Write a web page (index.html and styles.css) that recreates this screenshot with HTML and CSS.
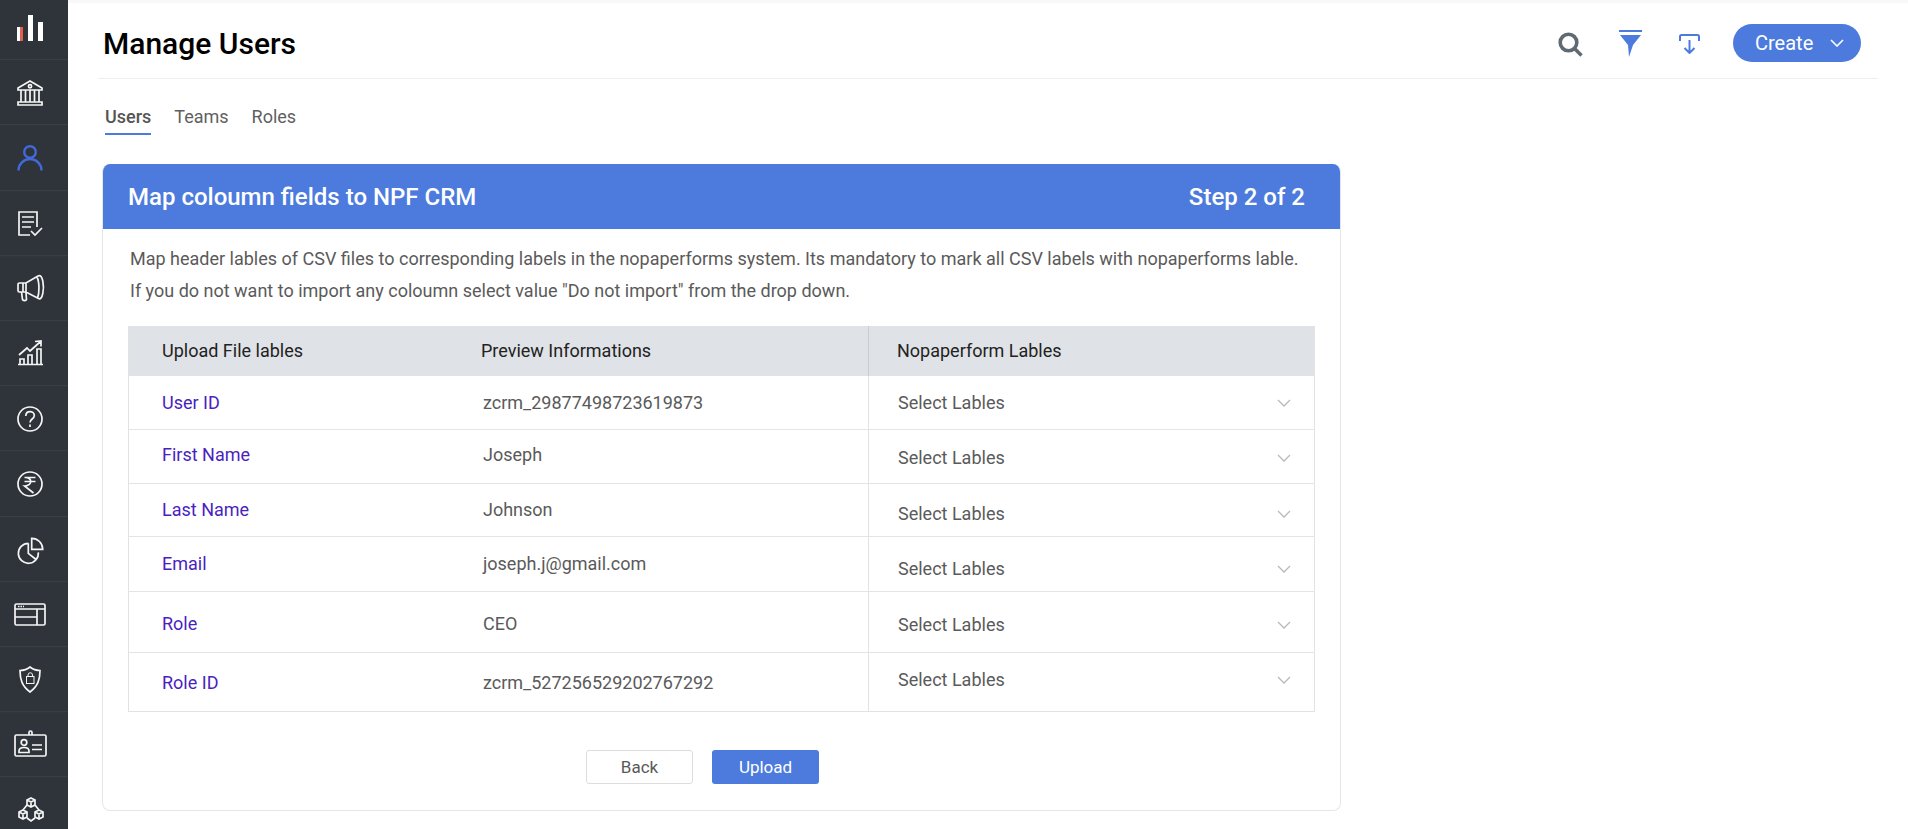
FILE: index.html
```html
<!DOCTYPE html>
<html lang="en">
  <head>
    <meta charset="utf-8">
    <title>Manage Users</title>
    <link rel="stylesheet" href="styles.css">
  </head>
  <body>
    <div class='app'>
      <div class='sidebar'>
        <div class='navitem first'>
          <svg viewBox='0 0 30 30' class='navicon'><g fill='#fff' stroke='none'><rect x='2' y='14' width='3' height='14'/><rect x='5' y='14' width='3' height='14' fill='#e0604f'/><rect x='13' y='2' width='5' height='26'/><rect x='23' y='9' width='5' height='19'/></g></svg>
        </div>
        <div class='navitem'>
          <svg viewBox='0 0 30 30' class='navicon'><path d='M15 3 3 10v2h24v-2zM3 24h24v3H3zM6 12v12M10.500 12v12M15 12v12M19.500 12v12M24 12v12'/><circle cx='15' cy='8.200' r='1.600'/></svg>
        </div>
        <div class='navitem'>
          <svg viewBox='0 0 30 30' class='navicon active'><circle cx='15' cy='9' r='5.800'/><path d='M3.500 27.500a11.500 11.500 0 0 1 23 0'/></svg>
        </div>
        <div class='navitem'>
          <svg viewBox='0 0 30 30' class='navicon'><path d='M15 27H4V4h18v15M7 9h12M7 14h12M7 19h9'/><path d='M16 23l4 4 7-7'/></svg>
        </div>
        <div class='navitem'>
          <svg viewBox='0 0 30 30' class='navicon'><path d='M4.500 10H11L23 3c2.500-1.500 4 1 4.800 5 .8 4 .8 9 0 12.500-.8 4-2.300 6-4.300 5L11 19H4.500A1.500 1.500 0 0 1 3 17.500v-6A1.500 1.500 0 0 1 4.500 10zM11 10v9M8 10v9M6.500 19l1 7.500c.3 1.500 3.700 1.500 4 0L11 19.500M22 4c2.500 5 2.500 16 .5 21.500'/></svg>
        </div>
        <div class='navitem'>
          <svg viewBox='0 0 30 30' class='navicon'><path d='M3 26.500h25M5 26v-5h4v5M13 26v-9h4v9M22 26V11h4v15M4 17l8-7 3 3 10-9M20 3.500l6-.5v5.500'/></svg>
        </div>
        <div class='navitem'>
          <svg viewBox='0 0 30 30' class='navicon'><circle cx='15' cy='15' r='12'/><path d='M10.800 12c0-6 8.500-5.500 8.500-.5 0 3.500-4.300 3.500-4.300 7M15 20.500v2.500'/></svg>
        </div>
        <div class='navitem'>
          <svg viewBox='0 0 30 30' class='navicon'><circle cx='15' cy='15' r='12'/><path d='M9.500 8.500h11M9.500 12.500h11M10 8.500c7-.5 8.500 8-.5 8.500l9 7'/></svg>
        </div>
        <div class='navitem'>
          <svg viewBox='0 0 30 30' class='navicon'><path d='M13.300 9.300A10 10 0 1 0 23.300 18.300M13.300 9.300v10l8.400 6.700M16.700 4.300v11h11A11 11 0 0 0 16.700 4.300z'/></svg>
        </div>
        <div class='navitem'>
          <svg viewBox='0 0 30 30' class='navicon'><rect x='0' y='5' width='30' height='21' rx='1.500'/><path d='M0 10h30M22 10v16M0 18h22'/><path d='M3 7.500h6' stroke-dasharray='1.500 1'/></svg>
        </div>
        <div class='navitem'>
          <svg viewBox='0 0 30 30' class='navicon'><path d='M15 3c3 2.500 6 3.500 10 3.500 0 9-2 15.500-10 21.500C7 22 5 15.500 5 6.500 9 6.500 12 5.500 15 3z'/><rect x='11.500' y='12.500' width='7.500' height='7' stroke-width='1'/><path d='M13 12.500v-1.500a2.200 2.200 0 0 1 4.500 0v1.500' stroke-width='1'/></svg>
        </div>
        <div class='navitem'>
          <svg viewBox='0 0 30 30' class='navicon'><rect x='0' y='6' width='31' height='21' rx='1.500'/><circle cx='9' cy='13.500' r='2.800'/><path d='M4 23.500v-1.500c0-2.500 2-3.500 5-3.500s5 1 5 3.500v1.500zM17 16h10M17 20.500h10M14 6V3.500a1.500 1.500 0 0 1 3 0V6'/></svg>
        </div>
        <div class='navitem'>
          <svg viewBox='0 0 30 30' class='navicon'><path transform='translate(1 0)' d='M15 3l4 2v5l-4 2-4-2V5zM11 5l4 2 4-2M15 7v5M7 15l4 2v5l-4 2-4-2v-5zM3 17l4 2 4-2M7 19v5M23 15l4 2v5l-4 2-4-2v-5zM19 17l4 2 4-2M23 19v5M11 10l-4 5M19 10l4 5M11 23l4 3 4-3'/></svg>
        </div>
      </div>

      <div class='main'>
        <div class='pagehead'>
          <h1 class='pagetitle'>Manage Users</h1>
          <div class='headactions'>
            <svg class='icon-search' viewBox='0 0 25 25'><circle cx='10.500' cy='10.500' r='8.300'/><path d='M16.500 16.500 23.500 23.500'/></svg>
            <svg class='icon-filter' viewBox='0 0 23 27'><rect x='0' y='0' width='23' height='2' /><path d='M1 5h21l-8 10-4 12-1-12z'/></svg>
            <svg class='icon-import' viewBox='0 0 21 20'><path d='M1 7V2.500A1.500 1.500 0 0 1 2.500 1h16A1.500 1.500 0 0 1 20 2.500V7M10.500 6v13M5.500 14l5 5 5-5'/></svg>
            <button class='btn-create'>Create
              <svg viewBox='0 0 14 8'><path d='M1 1l6 6 6-6'/></svg>
            </button>
          </div>
        </div>

        <div class='tabs'>
          <a class='tab on'>Users</a>
          <a class='tab'>Teams</a>
          <a class='tab'>Roles</a>
        </div>

        <div class='card'>
          <div class='cardhead'>
            <span>Map coloumn fields to NPF CRM</span>
            <span>Step 2 of 2</span>
          </div>
          <div class='cardbody'>
            <p class='intro'>Map header lables of CSV files to corresponding labels in the nopaperforms system. Its mandatory to mark all CSV labels with nopaperforms lable.<br>If you do not want to import any coloumn select value "Do not import" from the drop down.</p>

            <div class='maptable'>
              <div class='row headrow'>
                <div class='c1'>Upload File lables</div>
                <div class='c2'>Preview Informations</div>
                <div class='c3'>Nopaperform Lables</div>
              </div>
              <div class='row r1'>
                <div class='c1'>User ID</div>
                <div class='c2'>zcrm_29877498723619873</div>
                <div class='c3'>Select Lables <svg class='chev' viewBox='0 0 14 8'><path d='M1 1l6 6 6-6'/></svg></div>
              </div>
              <div class='row r2'>
                <div class='c1'>First Name</div>
                <div class='c2'>Joseph</div>
                <div class='c3'>Select Lables <svg class='chev' viewBox='0 0 14 8'><path d='M1 1l6 6 6-6'/></svg></div>
              </div>
              <div class='row r3'>
                <div class='c1'>Last Name</div>
                <div class='c2'>Johnson</div>
                <div class='c3'>Select Lables <svg class='chev' viewBox='0 0 14 8'><path d='M1 1l6 6 6-6'/></svg></div>
              </div>
              <div class='row r4'>
                <div class='c1'>Email</div>
                <div class='c2'>joseph.j@gmail.com</div>
                <div class='c3'>Select Lables <svg class='chev' viewBox='0 0 14 8'><path d='M1 1l6 6 6-6'/></svg></div>
              </div>
              <div class='row r5'>
                <div class='c1'>Role</div>
                <div class='c2'>CEO</div>
                <div class='c3'>Select Lables <svg class='chev' viewBox='0 0 14 8'><path d='M1 1l6 6 6-6'/></svg></div>
              </div>
              <div class='row r6'>
                <div class='c1'>Role ID</div>
                <div class='c2'>zcrm_527256529202767292</div>
                <div class='c3'>Select Lables <svg class='chev' viewBox='0 0 14 8'><path d='M1 1l6 6 6-6'/></svg></div>
              </div>
            </div>

            <div class='actions'>
              <button class='btn btn-back'>Back</button>
              <button class='btn btn-upload'>Upload</button>
            </div>
          </div>
        </div>
      </div>
    </div>
  </body>
</html>
```

FILE: styles.css
```css
* {
    box-sizing: border-box;
}
body, html {
    height: 100%;
    overflow: hidden;
}
body {
    margin: 0;
    color: #5a5a5a;
    font: 18px/1.4 Roboto, 'Liberation Sans', sans-serif;
    background: #fff;
}
h1, p {
    margin: 0;
}
.app {
    display: flex;
    height: 829px;
    overflow: hidden;
}

/* left rail */
.sidebar {
    flex: 0 0 68px;
    height: 829px;
    overflow: hidden;
    background-color: #2f343b;
    background-image: repeating-linear-gradient(to bottom, #2f343b 0, #2f343b 64.2px, #3b4047 64.2px, #3b4047 65.2px);
    background-position: 0 -4.8px;
}
.navitem {
    height: 65.2px;
    width: 60px;
    display: flex;
    align-items: center;
    justify-content: center;
}
.navitem.first {
    height: 60px;
    padding-bottom: 4px;
}
.navicon {
    width: 30px;
    height: 30px;
    fill: none;
    stroke: #f5f5f5;
    stroke-width: 1.7;
    overflow: visible;
}
.navicon.active {
    stroke: #4169d8;
    stroke-width: 2.4;
}

/* main column */
.main {
    flex: 1;
    min-width: 0;
    border-top: 3px solid #f8f8f8;
}
.pagehead {
    display: flex;
    align-items: center;
    justify-content: space-between;
    height: 76px;
    margin: 0 30px;
    padding: 5px 17px 0 5px;
    border-bottom: 1px solid #eeeeee;
}
.pagetitle {
    padding-top: 2px;
    color: #000;
    font-size: 30px;
    font-weight: 500;
    line-height: 36px;
}
.headactions {
    display: flex;
    align-items: center;
}
.icon-search {
    width: 25px;
    height: 25px;
    fill: none;
    stroke: #5f6a72;
    stroke-width: 3.6;
    margin-top: 3px;
}
.icon-filter {
    width: 23px;
    height: 27px;
    fill: #4c7bdd;
    margin-left: 36px;
}
.icon-import {
    width: 21px;
    height: 20px;
    fill: none;
    stroke: #4c7bdd;
    stroke-width: 2;
    margin-left: 37px;
    margin-top: 1px;
}
.btn-create {
    display: flex;
    align-items: center;
    justify-content: space-between;
    width: 128px;
    height: 38px;
    margin-left: 33px;
    padding: 0 17px 0 22px;
    border: 0;
    border-radius: 19px;
    background: #4c7bdd;
    color: #fff;
    font: 20px Roboto, sans-serif;
}
.btn-create svg {
    width: 14px;
    height: 8px;
    fill: none;
    stroke: #fff;
    stroke-width: 1.6;
}

.tabs {
    display: flex;
    gap: 23px;
    padding: 26px 0 0 37px;
}
.tab {
    padding-bottom: 4px;
    font-size: 18px;
    line-height: 24px;
    color: #5f5f5f;
}
.tab.on {
    border-bottom: 2px solid #4c7bdd;
    font-weight: 500;
    color: #555;
}

.card {
    width: 1239px;
    height: 647px;
    margin: 29px 0 0 34px;
    border: 1px solid #e6e6e6;
    border-top: 0;
    border-radius: 8px;
    overflow: hidden;
}
.cardhead {
    display: flex;
    justify-content: space-between;
    align-items: center;
    height: 65px;
    padding: 2px 35px 0 25px;
    background: #4c7bdd;
    color: #fff;
    font-size: 24px;
    font-weight: 500;
}
.cardbody {
    padding: 14px 25px 0;
}
.intro {
    padding-left: 2px;
    line-height: 32px;
    color: #5a5a5a;
    white-space: nowrap;
}
.maptable {
    margin-top: 19px;
    border: 1px solid #e2e2e2;
    border-top: 0;
}
.row {
    display: grid;
    grid-template-columns: 349px 390px 1fr;
    align-items: stretch;
    border-bottom: 1px solid #e4e4e4;
}
.row > div {
    display: flex;
    align-items: center;
}
.c1 {
    padding-left: 33px;
    color: #4a1fbf;
}
.c2 {
    padding-left: 5px;
}
.c3 {
    justify-content: space-between;
    padding: 0 23px 0 29px;
    border-left: 1px solid #e2e2e2;
}
.headrow {
    height: 50px;
    background: #dfe2e6;
    border-bottom: 0;
}
.headrow > div {
    color: #222;
}
.headrow .c2 {
    padding-left: 3px;
}
.headrow .c3 {
    padding-left: 28px;
    border-left-color: #c9cdd2;
}
.r1 { height: 54px; }
.r2 { height: 54px; }
.r3 { height: 53px; }
.r4 { height: 55px; }
.r5 { height: 61px; }
.r6 { height: 58px; border-bottom: 0; }

.r2 .c1, .r2 .c2 { padding-bottom: 4px; }
.r2 .c3 { padding-top: 2px; }
.r3 .c3 { padding-top: 8px; }
.r4 .c3 { padding-top: 10px; }
.r5 .c1, .r5 .c2 { padding-top: 3px; }
.r5 .c3 { padding-top: 5px; }
.r6 .c1, .r6 .c2 { padding-top: 1px; }
.r6 .c3 { padding-bottom: 5px; }

.chev {
    width: 14px;
    height: 8px;
    fill: none;
    stroke: #b9b9b9;
    stroke-width: 1.3;
}
.actions {
    display: flex;
    justify-content: center;
    gap: 19px;
    margin-top: 38px;
    padding-right: 38px;
}
.btn {
    width: 107px;
    height: 34px;
    border-radius: 3px;
    font: 17px Roboto, sans-serif;
}
.btn-back {
    border: 1px solid #dddddd;
    background: #fff;
    color: #5a5a5a;
}
.btn-upload {
    border: 0;
    background: #4c7bdd;
    color: #fff;
}
```
